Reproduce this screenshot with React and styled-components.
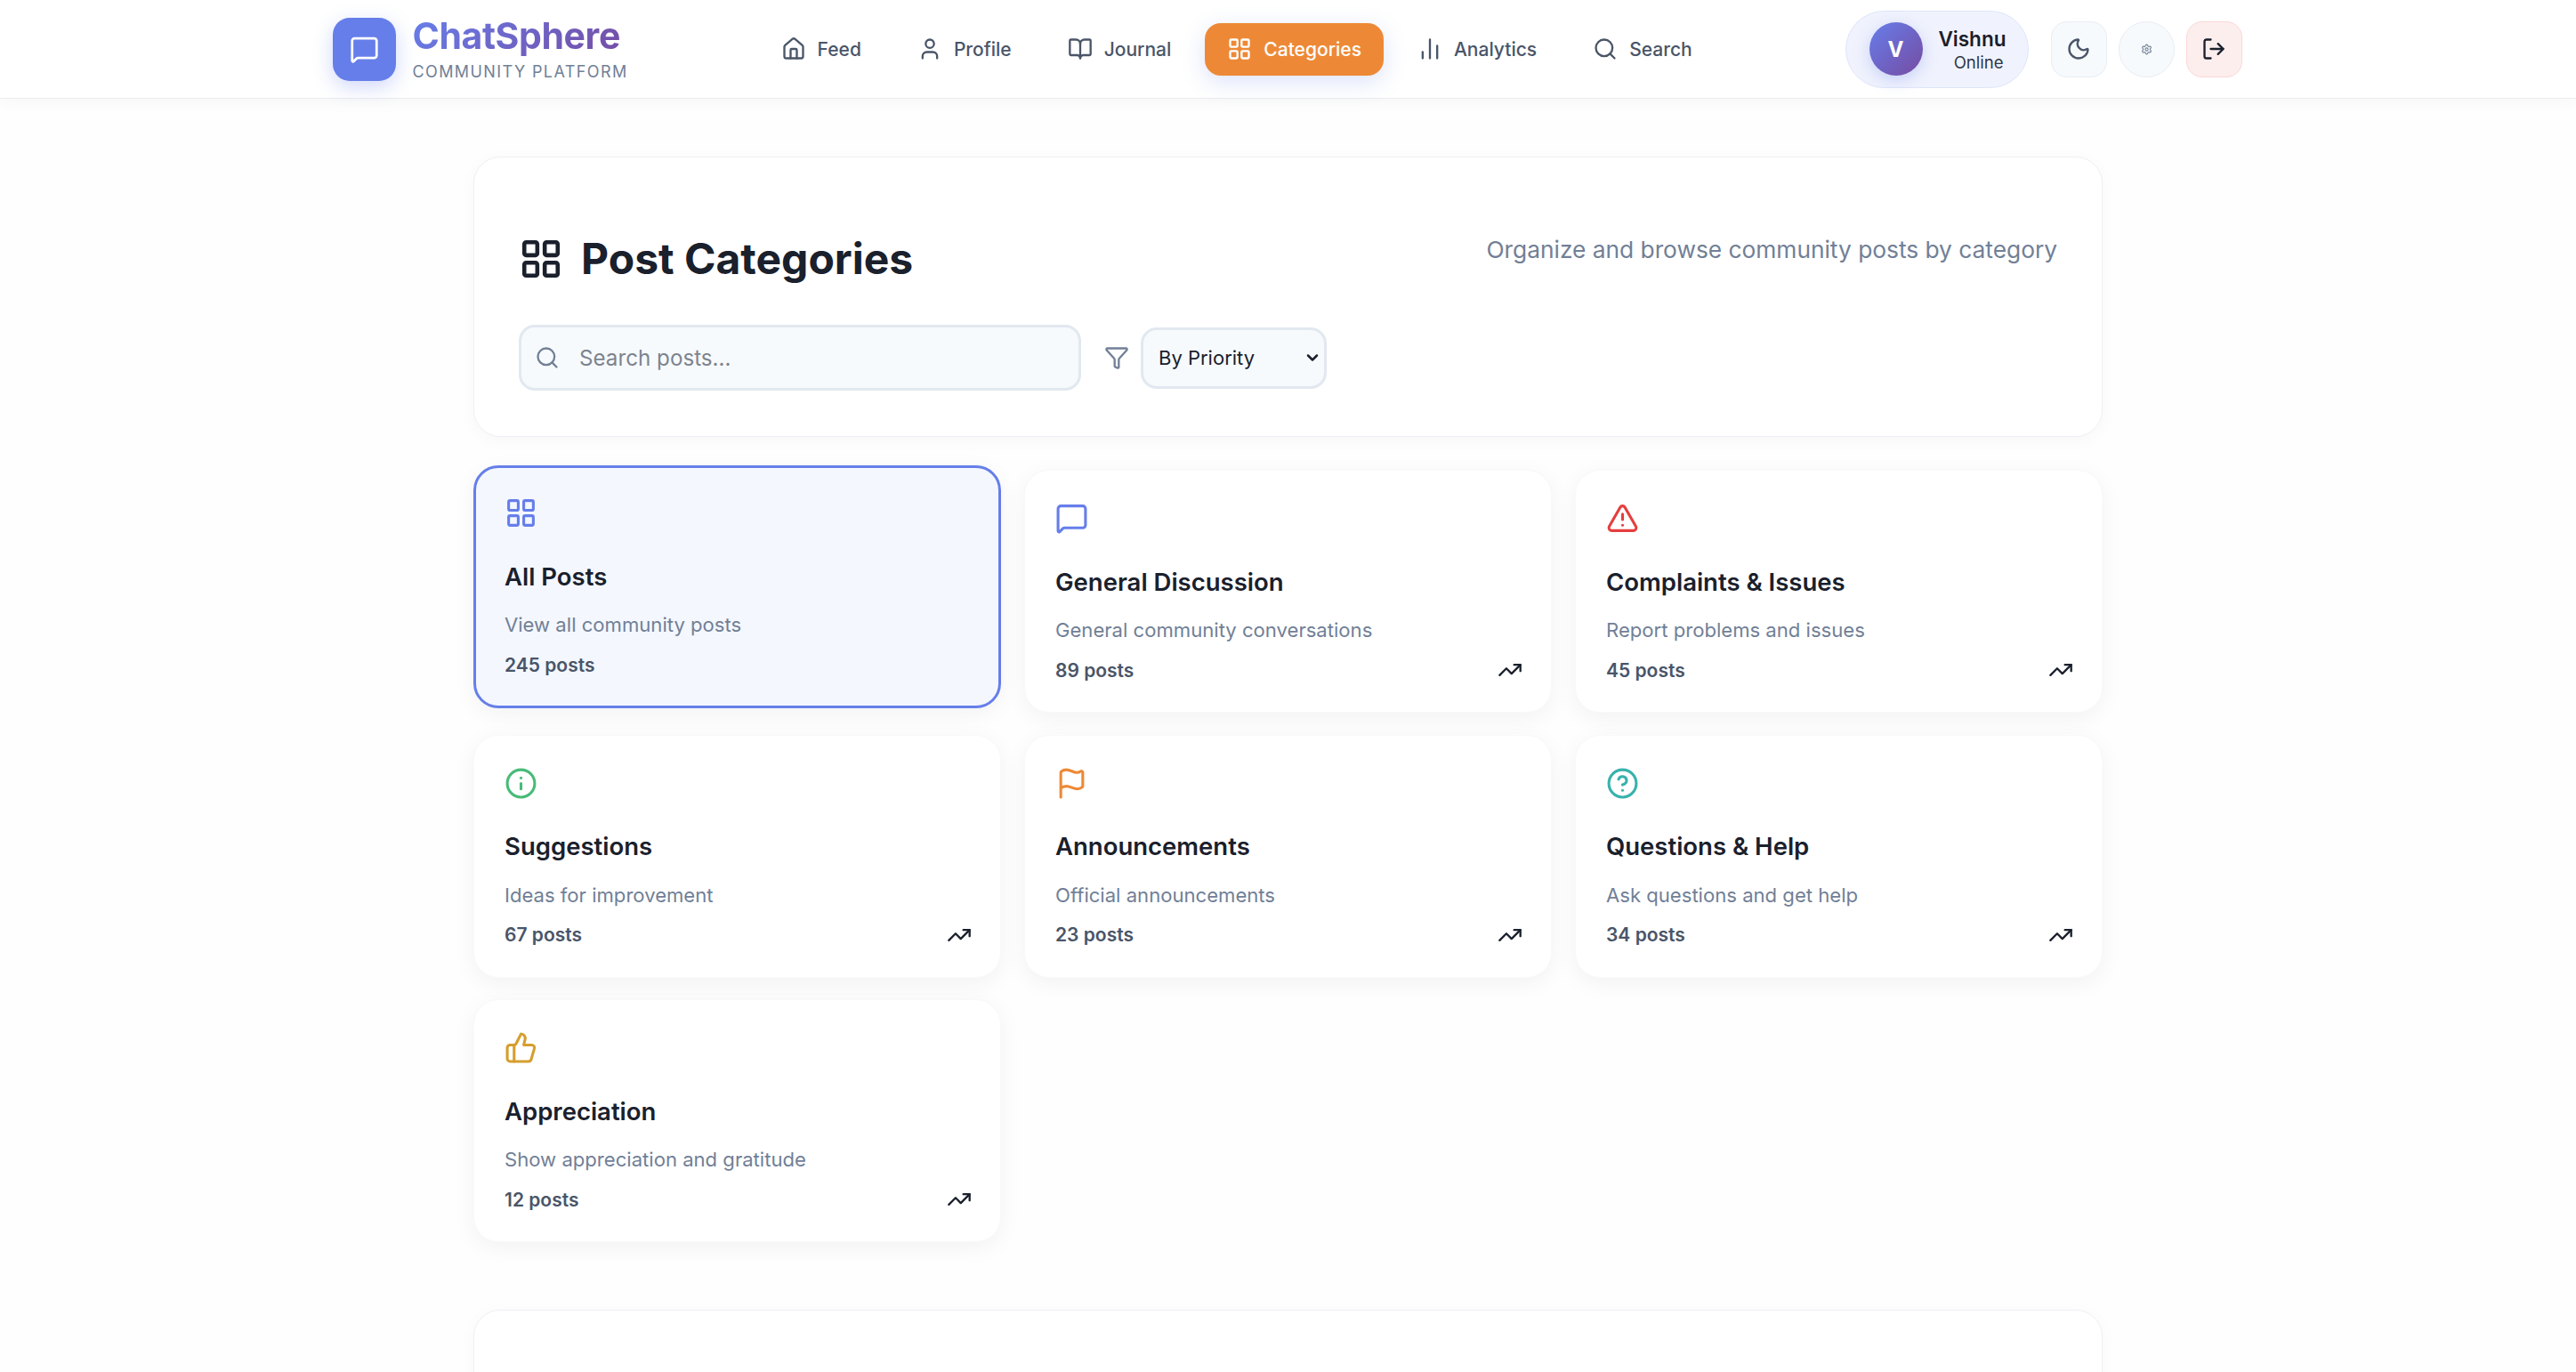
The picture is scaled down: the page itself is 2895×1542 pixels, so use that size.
import React from "react";
import styled, { createGlobalStyle } from "styled-components";
import {
  MessageSquare,
  Home,
  User,
  BookOpen,
  LayoutGrid,
  BarChart2,
  Search,
  Moon,
  Settings,
  LogOut,
  Filter,
  AlertTriangle,
  Info,
  Flag,
  HelpCircle,
  ThumbsUp,
  TrendingUp,
  ChevronDown,
} from "lucide-react";

const navItems = [
  { label: "Feed", icon: Home },
  { label: "Profile", icon: User },
  { label: "Journal", icon: BookOpen },
  { label: "Categories", icon: LayoutGrid, active: true },
  { label: "Analytics", icon: BarChart2 },
  { label: "Search", icon: Search },
];

const categories = [
  { title: "All Posts", desc: "View all community posts", count: 245, icon: LayoutGrid, color: "#667eea", active: true },
  { title: "General Discussion", desc: "General community conversations", count: 89, icon: MessageSquare, color: "#667eea" },
  { title: "Complaints & Issues", desc: "Report problems and issues", count: 45, icon: AlertTriangle, color: "#e53e3e" },
  { title: "Suggestions", desc: "Ideas for improvement", count: 67, icon: Info, color: "#48bb78" },
  { title: "Announcements", desc: "Official announcements", count: 23, icon: Flag, color: "#ed8936" },
  { title: "Questions & Help", desc: "Ask questions and get help", count: 34, icon: HelpCircle, color: "#38b2ac" },
  { title: "Appreciation", desc: "Show appreciation and gratitude", count: 12, icon: ThumbsUp, color: "#d69e2e" },
];

function App() {
  return (
    <>
      <GlobalStyle />
      <Header>
        <HeaderInner>
          <Brand>
            <LogoBox>
              <MessageSquare size={33} color="#fff" strokeWidth={2} />
            </LogoBox>
            <BrandText>
              <BrandName>ChatSphere</BrandName>
              <BrandTag>COMMUNITY PLATFORM</BrandTag>
            </BrandText>
          </Brand>
          <Nav>
            {navItems.map((item) => (
              <NavItem key={item.label} $active={item.active}>
                <item.icon size={28} strokeWidth={2} />
                {item.label}
              </NavItem>
            ))}
          </Nav>
          <UserArea>
            <UserPill>
              <Avatar>V</Avatar>
              <UserText>
                <UserName>Vishnu</UserName>
                <UserStatus>Online</UserStatus>
              </UserText>
            </UserPill>
            <IconButton>
              <Moon size={28} color="#4a5568" />
            </IconButton>
            <IconButton $round>
              <Settings size={13} color="#718096" />
            </IconButton>
            <IconButton $danger>
              <LogOut size={28} color="#1a202c" />
            </IconButton>
          </UserArea>
        </HeaderInner>
      </Header>
      <Main>
        <TopCard>
          <TitleRow>
            <Title>
              <LayoutGrid size={50} color="#1a202c" strokeWidth={2.2} />
              Post Categories
            </Title>
            <Subtitle>Organize and browse community posts by category</Subtitle>
          </TitleRow>
          <Controls>
            <SearchBox>
              <SearchIcon>
                <Search size={28} color="#718096" />
              </SearchIcon>
              <SearchInput placeholder="Search posts..." />
            </SearchBox>
            <Filter size={28} color="#718096" />
            <SelectWrap>
              <SortSelect defaultValue="priority">
                <option value="priority">By Priority</option>
              </SortSelect>
              <SelectArrow>
                <ChevronDown size={20} color="#1a202c" strokeWidth={3} />
              </SelectArrow>
            </SelectWrap>
          </Controls>
        </TopCard>
        <Grid>
          {categories.map((cat) => (
            <CategoryCard key={cat.title} $active={cat.active}>
              <cat.icon size={37} color={cat.color} />
              <CardTitle>{cat.title}</CardTitle>
              <CardDesc>{cat.desc}</CardDesc>
              <CardFooter>
                <PostCount>{cat.count} posts</PostCount>
                {!cat.active && <TrendingUp size={28} color="#1a202c" />}
              </CardFooter>
            </CategoryCard>
          ))}
        </Grid>
        <BottomCard />
      </Main>
    </>
  );
}

export default App;

const GlobalStyle = createGlobalStyle`
  html, body {
    margin: 0;
    height: 1542px;
    overflow: hidden;
    background: #fefefe;
    font-family: Inter, "Liberation Sans", sans-serif;
  }
  * { box-sizing: border-box; }
`;

const Header = styled.header`
  height: 111px;
  padding-right: 2px;
  background: #fff;
  border-bottom: 1px solid #e9ecf1;
  box-shadow: 0 3px 18px rgba(0, 0, 0, 0.035);
`;

const HeaderInner = styled.div`
  width: 2146px;
  height: 110px;
  margin: 0 auto;
  display: flex;
  align-items: center;
`;

const Brand = styled.div`
  display: flex;
  align-items: center;
  gap: 19px;
`;

const LogoBox = styled.div`
  width: 71px;
  height: 71px;
  border-radius: 19px;
  background: #667eea;
  display: flex;
  align-items: center;
  justify-content: center;
  box-shadow: 0 7px 22px rgba(102, 126, 234, 0.3);
`;

const BrandText = styled.div`
  display: flex;
  flex-direction: column;
`;

const BrandName = styled.div`
  font-size: 41px;
  line-height: 47px;
  font-weight: 700;
  letter-spacing: -0.4px;
  background: linear-gradient(135deg, #667eea 0%, #764ba2 100%);
  -webkit-background-clip: text;
  background-clip: text;
  color: transparent;
`;

const BrandTag = styled.div`
  margin-top: 3px;
  font-size: 18px;
  line-height: 27px;
  font-weight: 400;
  letter-spacing: 1.4px;
  color: #718096;
`;

const Nav = styled.nav`
  display: flex;
  align-items: center;
  gap: 13px;
  margin-left: 147px;
`;

const NavItem = styled.div`
  height: 59px;
  padding: 0 25px;
  display: flex;
  align-items: center;
  gap: 13px;
  border-radius: 18px;
  font-size: 21px;
  font-weight: 500;
  color: ${(props) => (props.$active ? "#fff" : "#4a5568")};
  background: ${(props) => (props.$active ? "#ed8936" : "transparent")};
  box-shadow: ${(props) => (props.$active ? "0 7px 26px rgba(102, 126, 234, 0.22)" : "none")};
`;

const UserArea = styled.div`
  margin-left: auto;
  display: flex;
  align-items: center;
  gap: 13px;
`;

const UserPill = styled.div`
  width: 206px;
  height: 87px;
  margin-right: 12px;
  padding: 0 26px;
  border-radius: 44px;
  background: #f0f3fd;
  border: 1px solid #dfe5fb;
  display: flex;
  align-items: center;
  gap: 18px;
`;

const Avatar = styled.div`
  width: 60px;
  height: 60px;
  flex-shrink: 0;
  border-radius: 50%;
  background: linear-gradient(135deg, #667eea 0%, #764ba2 100%);
  color: #fff;
  font-size: 24px;
  font-weight: 700;
  display: flex;
  align-items: center;
  justify-content: center;
  box-shadow: 0 5px 18px rgba(102, 126, 234, 0.3);
`;

const UserText = styled.div`
  display: flex;
  flex-direction: column;
  align-items: flex-end;
`;

const UserName = styled.div`
  font-size: 22.5px;
  line-height: 29px;
  font-weight: 600;
  color: #1a202c;
`;

const UserStatus = styled.div`
  font-size: 18.5px;
  line-height: 24px;
  color: #2d3748;
  padding-right: 3px;
`;

const IconButton = styled.div`
  width: 63px;
  height: 63px;
  border-radius: ${(props) => (props.$round ? "50%" : "18px")};
  background: ${(props) => (props.$danger ? "#fdeeee" : "#f7fafc")};
  border: 1px solid ${(props) => (props.$danger ? "#fcd6d6" : "#e8edf4")};
  display: flex;
  align-items: center;
  justify-content: center;
`;

const Main = styled.main`
  width: 1831px;
  margin: 65px auto 0;
`;

const TopCard = styled.section`
  height: 315px;
  padding: 82px 50px 0;
  background: #fff;
  border: 1px solid #eef0f5;
  border-radius: 30px;
  box-shadow: 0 4px 20px rgba(0, 0, 0, 0.03);
`;

const TitleRow = styled.div`
  display: flex;
  justify-content: space-between;
  align-items: flex-start;
`;

const Title = styled.h1`
  margin: 0;
  display: flex;
  align-items: center;
  gap: 20px;
  font-size: 48px;
  line-height: 63px;
  font-weight: 700;
  color: #1a202c;
`;

const Subtitle = styled.p`
  margin: 2px 0 0;
  font-size: 26.3px;
  line-height: 40px;
  color: #718096;
`;

const Controls = styled.div`
  margin-top: 43px;
  display: flex;
  align-items: center;
  gap: 14px;
`;

const SearchBox = styled.div`
  position: relative;
  width: 632px;
  height: 74px;
  margin-right: 12px;
`;

const SearchIcon = styled.span`
  position: absolute;
  left: 18px;
  top: 23px;
  display: flex;
`;

const SearchInput = styled.input`
  width: 100%;
  height: 100%;
  padding: 0 20px 0 65px;
  border: 3px solid #e2e8f0;
  border-radius: 18px;
  background: #f7fafc;
  font-family: inherit;
  font-size: 24.2px;
  color: #1a202c;
  outline: none;
  &::placeholder {
    color: #7d8490;
  }
`;

const SelectWrap = styled.div`
  position: relative;
  width: 209px;
  height: 69px;
  margin-left: -1px;
`;

const SortSelect = styled.select`
  appearance: none;
  width: 100%;
  height: 100%;
  padding: 0 30px 0 17px;
  border: 3px solid #e2e8f0;
  border-radius: 18px;
  background: #f7fafc;
  font-family: inherit;
  font-size: 22px;
  color: #1a202c;
`;

const SelectArrow = styled.span`
  position: absolute;
  right: 6px;
  top: 24px;
  display: flex;
  pointer-events: none;
`;

const Grid = styled.div`
  margin-top: 37px;
  display: grid;
  grid-template-columns: repeat(3, 1fr);
  gap: 24.5px 26px;
`;

const CategoryCard = styled.article`
  height: 273px;
  padding: ${(props) => (props.$active ? "32px 29px 0 32px" : "35px 32px 0 34px")};
  display: flex;
  flex-direction: column;
  align-items: flex-start;
  border-radius: 28px;
  background: ${(props) => (props.$active ? "#f4f7fe" : "#fff")};
  border: ${(props) => (props.$active ? "3px solid #667eea" : "1px solid #f8f9fb")};
  box-shadow: 0 6px 26px rgba(0, 0, 0, 0.05);
  transform: ${(props) => (props.$active ? "translateY(-5px)" : "none")};
`;

const CardTitle = styled.h3`
  margin: 35.5px 0 0;
  font-size: 27.5px;
  line-height: 34px;
  font-weight: 600;
  color: #1a202c;
`;

const CardDesc = styled.p`
  margin: 20.5px 0 0;
  font-size: 22.1px;
  line-height: 34px;
  color: #718096;
`;

const CardFooter = styled.div`
  width: 100%;
  margin-top: 11px;
  height: 34px;
  display: flex;
  align-items: center;
  justify-content: space-between;
`;

const PostCount = styled.span`
  font-size: 21px;
  font-weight: 600;
  color: #4a5568;
`;

const BottomCard = styled.section`
  height: 300px;
  margin-top: 76px;
  background: #fff;
  border: 1px solid #eef0f5;
  border-radius: 30px;
  box-shadow: 0 4px 20px rgba(0, 0, 0, 0.03);
`;
